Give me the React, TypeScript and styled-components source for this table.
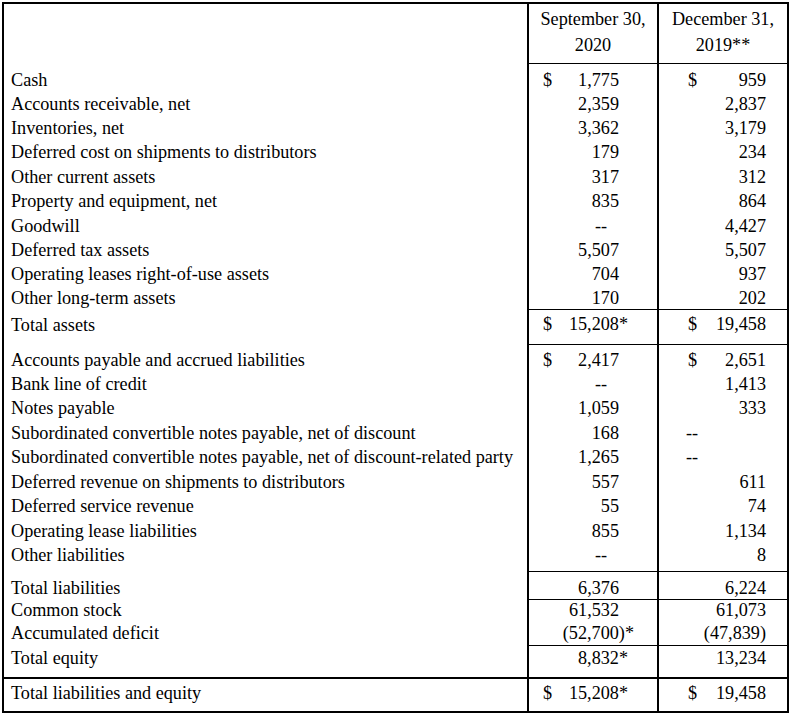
import styled, { createGlobalStyle } from 'styled-components';

const GlobalStyle = createGlobalStyle`
  body {
    margin: 0;
    background: #fff;
  }
`;

const Frame = styled.div`
  box-sizing: border-box;
  width: 787px;
  margin: 2px 0 0 2px;
  border: 2px solid #000;
  font-family: 'Liberation Serif', 'Times New Roman', serif;
  font-size: 18.2px;
  color: #000;
`;

const Row = styled.div<{ $h: number; $rule?: boolean }>`
  box-sizing: border-box;
  display: grid;
  grid-template-columns: 523px 130px 130px;
  height: ${(p) => p.$h}px;
  border-top: ${(p) => (p.$rule ? '2px solid #000' : 'none')};
`;

const Label = styled.div<{ $pt: number; $pb: number }>`
  display: flex;
  align-items: center;
  padding: ${(p) => p.$pt}px 0 ${(p) => p.$pb}px 7px;
  white-space: nowrap;
`;

const NumCell = styled.div<{ $col: 1 | 2; $line?: boolean; $pt: number; $pb: number }>`
  box-sizing: border-box;
  display: flex;
  align-items: center;
  border-left: 2px solid #000;
  border-bottom: ${(p) => (p.$line ? '1px solid #000' : 'none')};
  padding: ${(p) => p.$pt}px ${(p) => (p.$col === 1 ? 38 : 21)}px ${(p) => p.$pb}px 0;
  white-space: nowrap;
`;

const HeadCell = styled.div`
  box-sizing: border-box;
  display: flex;
  flex-direction: column;
  align-items: center;
  justify-content: center;
  border-left: 2px solid #000;
  border-bottom: 1px solid #000;
  padding-bottom: 4px;
  line-height: 26px;
`;

const Cur = styled.span<{ $col: 1 | 2 }>`
  margin-left: ${(p) => (p.$col === 1 ? 14 : 29)}px;
`;

const Value = styled.span`
  margin-left: auto;
`;

const Suffix = styled.span<{ $w: number }>`
  margin-right: -${(p) => p.$w}px;
`;

const Dash = styled.span<{ $col: 1 | 2 }>`
  margin-left: auto;
  margin-right: ${(p) => (p.$col === 1 ? 12 : 68)}px;
`;

type Cell = { cur?: boolean; v: string; suf?: string };
type Line = {
  label: string;
  a: Cell;
  b: Cell;
  h: number;
  pt?: number;
  pb?: number;
  line?: boolean;
  rule?: boolean;
};

const n = (v: string, suf?: string): Cell => ({ v, suf });
const c = (v: string, suf?: string): Cell => ({ cur: true, v, suf });
const d: Cell = { v: '--' };

const lines: Line[] = [
  { label: 'Cash', a: c('1,775'), b: c('959'), h: 28, pt: 4 },
  { label: 'Accounts receivable, net', a: n('2,359'), b: n('2,837'), h: 24.4 },
  { label: 'Inventories, net', a: n('3,362'), b: n('3,179'), h: 24.4 },
  { label: 'Deferred cost on shipments to distributors', a: n('179'), b: n('234'), h: 24.4 },
  { label: 'Other current assets', a: n('317'), b: n('312'), h: 24.4 },
  { label: 'Property and equipment, net', a: n('835'), b: n('864'), h: 24.4 },
  { label: 'Goodwill', a: d, b: n('4,427'), h: 24.4 },
  { label: 'Deferred tax assets', a: n('5,507'), b: n('5,507'), h: 24.4 },
  { label: 'Operating leases right-of-use assets', a: n('704'), b: n('937'), h: 24.4 },
  { label: 'Other long-term assets', a: n('170'), b: n('202'), h: 22.8, line: true },
  { label: 'Total assets', a: c('15,208', '*'), b: c('19,458'), h: 35, pb: 4, line: true },
  { label: 'Accounts payable and accrued liabilities', a: c('2,417'), b: c('2,651'), h: 27.25, pt: 3 },
  { label: 'Bank line of credit', a: d, b: n('1,413'), h: 24.5 },
  { label: 'Notes payable', a: n('1,059'), b: n('333'), h: 24.5 },
  { label: 'Subordinated convertible notes payable, net of discount', a: n('168'), b: d, h: 24.5 },
  {
    label: 'Subordinated convertible notes payable, net of discount-related party',
    a: n('1,265'),
    b: d,
    h: 24.5,
  },
  { label: 'Deferred revenue on shipments to distributors', a: n('557'), b: n('611'), h: 24.5 },
  { label: 'Deferred service revenue', a: n('55'), b: n('74'), h: 24.5 },
  { label: 'Operating lease liabilities', a: n('855'), b: n('1,134'), h: 24.5 },
  { label: 'Other liabilities', a: d, b: n('8'), h: 28.25, pb: 4, line: true },
  { label: 'Total liabilities', a: n('6,376'), b: n('6,224'), h: 24, pt: 6, line: true },
  { label: 'Common stock', a: n('61,532'), b: n('61,073'), h: 26, pt: 4 },
  { label: 'Accumulated deficit', a: n('(52,700', ')*'), b: n('(47,839)'), h: 24, line: true },
  { label: 'Total equity', a: n('8,832', '*'), b: n('13,234'), h: 31, pb: 5 },
  {
    label: 'Total liabilities and equity',
    a: c('15,208', '*'),
    b: c('19,458'),
    h: 34,
    pb: 2,
    rule: true,
  },
];

function Amount({ cell, col, line, pt, pb }: { cell: Cell; col: 1 | 2; line?: boolean; pt: number; pb: number }) {
  return (
    <NumCell $col={col} $line={line} $pt={pt} $pb={pb}>
      {cell.cur && <Cur $col={col}>$</Cur>}
      {cell.v === '--' ? (
        <Dash $col={col}>--</Dash>
      ) : (
        <Value>
          {cell.v}
          {cell.suf && <Suffix $w={cell.suf.length === 2 ? 15 : 9}>{cell.suf}</Suffix>}
        </Value>
      )}
    </NumCell>
  );
}

export default function App() {
  return (
    <>
      <GlobalStyle />
      <Frame>
        <Row $h={60}>
          <div />
          <HeadCell>
            <span>September 30,</span>
            <span>2020</span>
          </HeadCell>
          <HeadCell>
            <span>December 31,</span>
            <span>2019**</span>
          </HeadCell>
        </Row>
        {lines.map((l) => {
          const pt = l.pt ?? 0;
          const pb = l.pb ?? 0;
          return (
            <Row key={l.label} $h={l.h} $rule={l.rule}>
              <Label $pt={pt} $pb={pb}>
                {l.label}
              </Label>
              <Amount cell={l.a} col={1} line={l.line} pt={pt} pb={pb} />
              <Amount cell={l.b} col={2} line={l.line} pt={pt} pb={pb} />
            </Row>
          );
        })}
      </Frame>
    </>
  );
}
